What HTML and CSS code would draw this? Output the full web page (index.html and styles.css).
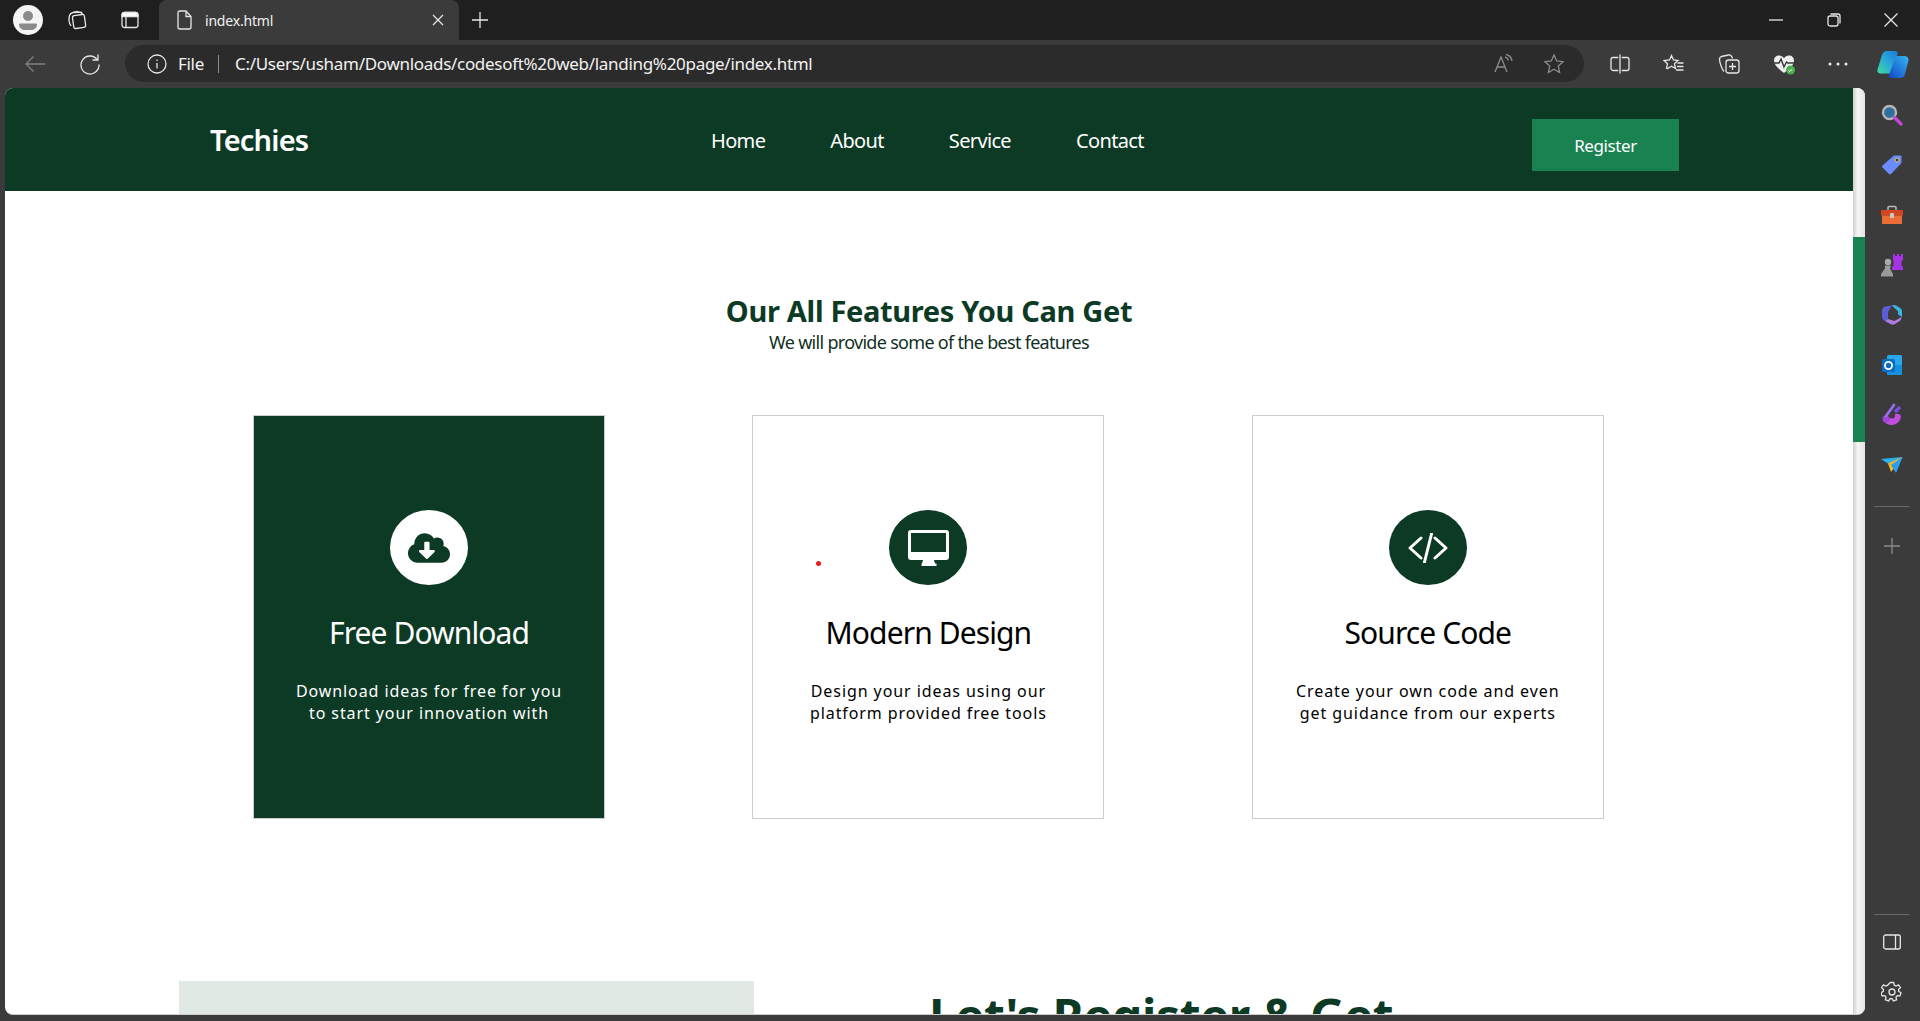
FILE: index.html
```html
<!DOCTYPE html>
<html lang="en">
<head>
  <meta charset="UTF-8">
  <meta name="viewport" content="width=device-width, initial-scale=1.0">
  <title>index.html</title>
  <link rel="stylesheet" href="styles.css">
</head>
<body>

  <!-- tab strip -->
  <div class="tabstrip">
    <div class="avatar">
      <svg width="30" height="30" viewBox="0 0 30 30"><circle cx="15" cy="15" r="15" fill="#f4f4f4"/><circle cx="15" cy="11" r="5" fill="#8a8a8a"/><path d="M7 18.500h16a1 1 0 0 1 1 1c0 3.500-3 5.500-6 5.500h-6c-3 0-6-2-6-5.500a1 1 0 0 1 1-1z" fill="#8a8a8a"/></svg>
    </div>
    <span class="strip-btn">
      <svg class="ico" width="22" height="22" viewBox="0 0 22 22"><rect x="7" y="6" width="12" height="13" rx="2" transform="rotate(-8 13 12)"/><path d="M5 17C3 14 2.500 10 3.500 6.500 4 5 5 4 7 3.500L12 2.500"/><path d="M8 3.500 13 3c2 0 3 .5 3.500 2"/></svg>
    </span>
    <span class="strip-btn">
      <svg class="ico" width="20" height="20" viewBox="0 0 20 20"><rect x="2" y="2.500" width="16" height="15" rx="2.500"/><path d="M2 6.500h16V5a2.500 2.500 0 0 0-2.500-2.500h-11A2.500 2.500 0 0 0 2 5z" fill="#fff"/><path d="M6 6.500v11"/></svg>
    </span>
    <div class="tab">
      <svg class="ico" width="18" height="20" viewBox="0 0 18 20"><path d="M3 3a2 2 0 0 1 2-2h6l5 5.500V17a2 2 0 0 1-2 2H5a2 2 0 0 1-2-2z"/><path d="M11 1v5.500h5"/></svg>
      <span class="tab-title">index.html</span>
      <svg class="ico tab-close" width="12" height="12" viewBox="0 0 12 12"><path d="M1 1l10 10M11 1 1 11"/></svg>
    </div>
    <span class="new-tab">
      <svg class="ico" width="18" height="18" viewBox="0 0 18 18"><path d="M9 1v16M1 9h16"/></svg>
    </span>
    <div class="win-btns">
      <svg class="ico" width="14" height="14" viewBox="0 0 14 14"><path d="M0 7h14"/></svg>
      <svg class="ico" width="14" height="14" viewBox="0 0 14 14"><rect x="1" y="3" width="10" height="10" rx="2"/><path d="M3.500 1H11a2 2 0 0 1 2 2v7.500"/></svg>
      <svg class="ico" width="14" height="14" viewBox="0 0 14 14"><path d="M.5.500l13 13M13.500.500l-13 13"/></svg>
    </div>
  </div>

  <!-- toolbar -->
  <div class="toolbar">
    <span class="tool-btn back">
      <svg class="ico" width="22" height="18" viewBox="0 0 22 18"><path d="M21 9H2M9.500 1.500 2 9l7.500 7.500"/></svg>
    </span>
    <span class="tool-btn refresh">
      <svg class="ico" width="22" height="22" viewBox="0 0 22 22"><path d="M18.500 7A9 9 0 1 0 20 11.500"/><path d="M19 1.500V7h-5.500"/></svg>
    </span>
    <div class="addressbar">
      <svg class="ico" width="20" height="20" viewBox="0 0 20 20"><circle cx="10" cy="10" r="9"/><path d="M10 9v5.500M10 5.500v1.500"/></svg>
      <span class="scheme">File</span>
      <span class="addr-sep"></span>
      <span class="url">C:/Users/usham/Downloads/codesoft%20web/landing%20page/index.html</span>
      <div class="addr-right">
        <svg class="ico dim" width="20" height="20" viewBox="0 0 20 20"><path d="M1 18 7 3l6 15M3 13h8"/><path d="M11 3c2 .5 3 1.500 3.500 3.500M12 .5c3 .5 5.500 3 6 6.500"/></svg>
        <svg class="ico dim" width="22" height="22" viewBox="0 0 22 22"><path d="M11 2l2.700 6 6.300.7-4.700 4.300 1.300 6.500L11 16.300 5.400 19.500 6.700 13 2 8.700 8.300 8z"/></svg>
      </div>
    </div>
    <div class="tool-right">
      <svg class="ico" width="20" height="20" viewBox="0 0 20 20"><rect x="1" y="3.500" width="18" height="13" rx="2"/><path d="M10 1v18" stroke="#3b3b3b" stroke-width="3.500"/><path d="M10 .5v19"/></svg>
      <svg class="ico" width="22" height="22" viewBox="0 0 22 22"><path d="M8.500 2.500l2 4.500 4.500.5-3.500 3.300 1 4.700-4-2.300-4 2.300-1-.2 1-4.500L1 7.500 6.500 7z"/><path d="M14.500 10h6M14 13.500h6.500M13 17h7.500"/></svg>
      <svg class="ico" width="22" height="22" viewBox="0 0 22 22"><path d="M6 18.500C4.500 17 2 11 1.500 7c-.2-2 .5-3 2-3.500l7-1.500c1.500-.3 2.500.2 3.500 2l.5 1.500"/><rect x="8" y="7" width="13" height="13" rx="2.500"/><path d="M14.500 10v7M11 13.500h7"/></svg>
      <svg width="24" height="24" viewBox="0 0 24 24"><path d="M12 21C6 16.500 2 13 2 8.500 2 5.500 4.200 3.500 7 3.500c2 0 3.800 1 5 2.700 1.200-1.700 3-2.700 5-2.700 2.800 0 5 2 5 5 0 4.500-4 8-10 12.500z" fill="#eee"/><path d="M1 11h6l2-4 3 8 2.500-5 1.500 1h7" fill="none" stroke="#3b3b3b" stroke-width="1.500"/><circle cx="18.500" cy="18" r="4.500" fill="#4caf50"/><path d="M16.500 18.500l1.300 1 2.500-2.500" fill="none" stroke="#fff"/></svg>
      <svg width="22" height="6" viewBox="0 0 22 6"><circle cx="3" cy="3" r="1.500" fill="#eee"/><circle cx="11" cy="3" r="1.500" fill="#eee"/><circle cx="19" cy="3" r="1.500" fill="#eee"/></svg>
      <svg class="copilot" width="32" height="28" viewBox="0 0 32 28">
        <defs>
          <linearGradient id="copA" x1="0" y1="1" x2="1" y2="0"><stop offset="0" stop-color="#3ddc97"/><stop offset=".5" stop-color="#2aa8d8"/><stop offset="1" stop-color="#1b7be0"/></linearGradient>
          <linearGradient id="copB" x1="0" y1="1" x2="1" y2="0"><stop offset="0" stop-color="#1446c8"/><stop offset="1" stop-color="#35b6f0"/></linearGradient>
        </defs>
        <path d="M10 1h8c2 0 3 1.500 2.500 3L15 22c-.5 1-1.500 1.500-3 1.500H4c-3 0-4-2-3.500-4L5 5C6 2.500 7.500 1 10 1z" fill="url(#copA)"/>
        <path d="M20 6h7c3 0 5 2 4.500 4.500L28 24c-.5 2.500-2.500 4-5 4h-9c-2 0-2.500-1.500-2-3l6-17c.4-1.200 1-2 2-2z" fill="url(#copB)"/>
      </svg>
    </div>
  </div>

  <div class="main">
    <div class="viewport">
      <div class="page">

        <nav class="navbar">
          <div class="logo">Techies</div>
          <ul class="nav-links">
            <li>Home</li>
            <li>About</li>
            <li>Service</li>
            <li>Contact</li>
          </ul>
          <a class="btn-register">Register</a>
        </nav>

        <section class="features">
          <h2>Our All Features You Can Get</h2>
          <p class="features-sub">We will provide some of the best features</p>

          <div class="cards">
            <div class="card card-active">
              <div class="card-icon">
                <svg width="42" height="34" viewBox="0 0 640 512"><path d="M537.600 226.600c4.100-10.700 6.400-22.400 6.400-34.600 0-53-43-96-96-96-19.700 0-38.100 6-53.300 16.200C367 64.200 315.300 32 256 32c-88.400 0-160 71.600-160 160 0 2.700.1 5.400.2 8.100C40.200 219.800 0 273.200 0 336c0 79.500 64.500 144 144 144h368c70.700 0 128-57.300 128-128 0-61.900-44-113.600-102.400-125.400zm-132.900 88.700L299.300 420.700c-6.200 6.200-16.400 6.200-22.600 0L171.300 315.300c-10.100-10.100-2.900-27.300 11.300-27.300H248V176c0-8.800 7.200-16 16-16h48c8.800 0 16 7.200 16 16v112h65.400c14.200 0 21.400 17.200 11.300 27.300z" fill="#0d3a25"/></svg>
              </div>
              <h3>Free Download</h3>
              <p>Download ideas for free for you<br>to start your innovation with</p>
            </div>

            <div class="card">
              <span class="red-dot"></span>
              <div class="card-icon">
                <svg width="41" height="36" viewBox="0 0 41 36"><path fill-rule="evenodd" d="M3 0h35a3 3 0 0 1 3 3v24a3 3 0 0 1-3 3H3a3 3 0 0 1-3-3V3a3 3 0 0 1 3-3zm0 3v19h35V3z" fill="#fff"/><path d="M15 30h11l1 3.500h1.500V36h-15v-2.500H14z" fill="#fff"/></svg>
              </div>
              <h3>Modern Design</h3>
              <p>Design your ideas using our<br>platform provided free tools</p>
            </div>

            <div class="card">
              <div class="card-icon">
                <svg width="40" height="30" viewBox="0 0 40 30"><path d="M13 5 2 15 13 25M27 5l11 10-11 10M23.500 1l-7 28" fill="none" stroke="#fff" stroke-width="3" stroke-linecap="round" stroke-linejoin="round"/></svg>
              </div>
              <h3>Source Code</h3>
              <p>Create your own code and even<br>get guidance from our experts</p>
            </div>
          </div>
        </section>

        <section class="register">
          <div class="register-img"></div>
          <h2>Let's Register &amp; Get</h2>
        </section>

      </div>
      <div class="scrollbar"><div class="scroll-thumb"></div></div>
    </div>

    <!-- edge sidebar -->
    <aside class="sidebar">
      <span class="side-item">
        <svg width="22" height="22" viewBox="0 0 22 22"><circle cx="8.500" cy="8.500" r="6.500" fill="#2f6f9f" stroke="#b5b5b5" stroke-width="2.400"/><path d="M13.500 13.500 20 20" stroke="#c944d8" stroke-width="3.200" stroke-linecap="round"/></svg>
      </span>
      <span class="side-item">
        <svg width="22" height="22" viewBox="0 0 22 22"><path d="M13 1.500h6.500a1 1 0 0 1 1 1V9L10 20a1.500 1.500 0 0 1-2 0l-6.500-6.500a1.500 1.500 0 0 1 0-2z" fill="#6a8cff"/><circle cx="16" cy="6" r="2" fill="#27346e" stroke="#f5cf2c"/></svg>
      </span>
      <span class="side-item">
        <svg width="24" height="20" viewBox="0 0 24 20"><path d="M8 5V2.500a1 1 0 0 1 1-1h6a1 1 0 0 1 1 1V5" fill="none" stroke="#bbb" stroke-width="1.500"/><rect x="1" y="5" width="22" height="5.500" fill="#d2451f"/><path d="M2 10.500h20V18a1 1 0 0 1-1 1H3a1 1 0 0 1-1-1z" fill="#ec6d36"/><rect x="10" y="8" width="4" height="5" rx="1" fill="#c8c8c8"/></svg>
      </span>
      <span class="side-item">
        <svg width="24" height="24" viewBox="0 0 24 24"><path d="M14 2h2v2h2V2h2v2h2V2h2v6l-1.500 1v5l1.500 1v3H13v-3l1.500-1V9L14 8z" fill="#a733e8" transform="translate(-1 -1)"/><circle cx="8" cy="9" r="3.200" fill="#a9a9a9"/><path d="M5 12.500h6l-1 3 3 5.500v2.500H1V21l4-5.500z" fill="#9a9a9a"/></svg>
      </span>
      <span class="side-item">
        <svg width="22" height="22" viewBox="0 0 22 22"><path d="M11 1.500c1.500-.8 3-.5 4.500.3l3 1.800c1.500.9 2.500 2 2.500 3.900V13l-4-2.500V8c0-1-.5-1.500-1.500-2z" fill="#39b4e0"/><path d="M1 7c0-2 1-3.500 3-4.500L11 1.500 7 8v7L4 17C2 16 1 14.500 1 13z" fill="#5b5fd6"/><path d="M4 17l3-2 6.500 2 7-4c0 2-1 3.500-2.500 4.500l-4 2.500c-1.500.9-3 1-4.500.1z" fill="#b07adf"/></svg>
      </span>
      <span class="side-item">
        <svg width="22" height="22" viewBox="0 0 22 22"><rect x="6" y="1" width="15" height="20" rx="1.500" fill="#28a8ea"/><path d="M6 11h15v9a1 1 0 0 1-1 1H7a1 1 0 0 1-1-1z" fill="#1490df"/><rect x="1" y="5" width="13" height="13" rx="1.500" fill="#0a6cc4"/><circle cx="7.500" cy="11.500" r="3.600" fill="none" stroke="#fff" stroke-width="1.800"/></svg>
      </span>
      <span class="side-item">
        <svg width="22" height="24" viewBox="0 0 22 24"><path d="M14 11c3-.5 5 .5 6 2-.5 6-5 9-9.500 9-4 0-7-2.500-8-5l7-2c1.500 1 4 .5 4.500-1.500z" fill="#c04fe0"/><circle cx="5" cy="16" r="3.500" fill="#9c45d8"/><path d="M5 13 13 2" stroke="#9a6cf0" stroke-width="2.800" stroke-linecap="round"/><path d="M14 9l5-5" stroke="#7a4be0" stroke-width="3.600"/></svg>
      </span>
      <span class="side-item">
        <svg width="22" height="18" viewBox="0 0 22 18"><path d="M0 3 21.500 1 9 9z" fill="#2bb0ef"/><path d="M21.500 1 15 16 9 10z" fill="#1f8fe0"/><path d="M21.500 1 7 7.500 10 16z" fill="#f7b51b"/><path d="M21.500 1 10 9l5 8z" fill="#2a9ff0"/></svg>
      </span>
      <hr class="side-divider side-divider-top">
      <span class="side-item">
        <svg class="ico dim" width="16" height="16" viewBox="0 0 16 16"><path d="M8 0v16M0 8h16"/></svg>
      </span>
      <hr class="side-divider side-divider-bottom">
      <span class="side-item">
        <svg class="ico" width="18" height="16" viewBox="0 0 18 16"><rect x=".7" y="1" width="16.600" height="14" rx="2"/><path d="M12.500 1v14"/></svg>
      </span>
      <span class="side-item">
        <svg class="ico" width="22" height="22" viewBox="0 0 22 22"><circle cx="11" cy="11" r="3"/><path d="M9.300 1.500h3.400l.6 2.700 1.700.8 2.500-1.200 2 2.800-2 1.900.2 1.900 2.300 1.300-1 3.200-2.800-.2-1.200 1.500.6 2.700-3.200 1-1.400-2.300h-2l-1.400 2.300-3.200-1 .6-2.700-1.200-1.500-2.800.2-1-3.200 2.300-1.300.2-1.900-2-1.900 2-2.800 2.500 1.200 1.700-.8z"/></svg>
      </span>
    </aside>
  </div>

</body>
</html>
```

FILE: styles.css
```css
* {
  box-sizing: border-box;
}

html, body {
  height: 100%;
}

body {
  margin: 0;
  overflow: hidden;
  display: flex;
  flex-direction: column;
  background: #3b3b3b;
  color: #000;
  font-family: "Noto Sans", "Open Sans", sans-serif;
}

.ico {
  fill: none;
  stroke: #e6e6e6;
  stroke-width: 1.300;
  flex: none;
}

.ico.dim {
  stroke: #8c8c8c;
}

/* tab strip */
.tabstrip {
  height: 40px;
  flex: none;
  display: flex;
  align-items: center;
  background: #1f1f1f;
  padding-left: 13px;
}

.avatar {
  width: 30px;
  height: 30px;
  margin-right: 23px;
}

.strip-btn {
  width: 22px;
  display: flex;
  justify-content: center;
  margin-right: 31px;
}

.tab {
  width: 300px;
  height: 40px;
  margin-left: -13px;
  display: flex;
  align-items: center;
  padding: 0 15px 0 16px;
  background: #3b3b3b;
  border-radius: 8px 8px 0 0;
  color: #f0f0f0;
}

.tab-title {
  margin-left: 12px;
  font-size: 14px;
  letter-spacing: -0.2px;
}

.tab-close {
  margin-left: auto;
}

.new-tab {
  margin-left: 12px;
  display: flex;
}

.win-btns {
  margin-left: auto;
  width: 151px;
  padding-right: 22px;
  display: flex;
  justify-content: space-between;
}

/* toolbar */
.toolbar {
  height: 48px;
  flex: none;
  display: flex;
  align-items: center;
  padding-bottom: 1px;
  background: #3b3b3b;
}

.tool-btn {
  display: flex;
}

.back {
  margin-left: 24px;
}

.back .ico {
  stroke: #808080;
}

.refresh {
  margin-left: 33px;
}

.addressbar {
  width: 1461px;
  height: 37px;
  margin-left: 24px;
  padding-left: 22px;
  display: flex;
  align-items: center;
  border-radius: 19px;
  background: #2b2b2b;
  color: #f2f2f2;
  font-size: 17px;
  letter-spacing: -0.3px;
}

.scheme {
  margin-left: 11px;
}

.addr-sep {
  width: 1px;
  height: 18px;
  margin: 0 16px 0 14px;
  background: #8a8a8a;
}

.addr-right {
  margin-left: auto;
  width: 90px;
  padding-right: 19px;
  display: flex;
  align-items: center;
  justify-content: space-between;
}

.tool-right {
  flex: 1;
  padding-left: 8px;
  display: grid;
  grid-template-columns: repeat(6, 54.6px);
  align-items: center;
  justify-items: center;
}

/* page area */
.main {
  flex: 1;
  min-height: 0;
  display: flex;
}

.viewport {
  width: 1860px;
  height: 927px;
  margin-left: 5px;
  display: flex;
  overflow: hidden;
  border-radius: 8px;
  background: #fff;
  border-bottom: 1px solid #ccc;
}

.page {
  width: 1848px;
  flex: none;
  overflow: hidden;
}

.scrollbar {
  width: 12px;
  flex: none;
  background: linear-gradient(to right, #cfcfcf, #f5f5f5 40%, #e4e4e4);
}

.scroll-thumb {
  height: 205px;
  margin-top: 149px;
  background: #1a8251;
}

/* navbar */
.navbar {
  height: 103px;
  display: flex;
  align-items: flex-start;
  padding-left: 205px;
  background: #0d3a25;
  color: #fff;
}

.logo {
  width: 501px;
  margin-top: 29px;
  font-size: 29px;
  line-height: 46px;
  font-weight: 600;
  letter-spacing: -0.8px;
}

.nav-links {
  list-style: none;
  margin: 39px 0 0;
  padding: 0;
  display: flex;
  gap: 65px;
  font-size: 20px;
  line-height: 28px;
  letter-spacing: -0.65px;
}

.btn-register {
  width: 147px;
  height: 52px;
  margin: 31px 174px 0 auto;
  display: flex;
  align-items: center;
  justify-content: center;
  padding-top: 1px;
  background: #1a8251;
  color: #fff;
  font-size: 17px;
  letter-spacing: -0.4px;
}

/* features */
.features {
  padding-top: 100px;
  text-align: center;
}

.features h2 {
  margin: 0;
  font-size: 29px;
  line-height: 40px;
  font-weight: 700;
  letter-spacing: -0.33px;
  color: #0d3a25;
}

.features-sub {
  margin: -1px 0 0;
  font-size: 18px;
  line-height: 24px;
  letter-spacing: -0.7px;
  color: #10301f;
}

.cards {
  margin: 61px 0 0 248px;
  width: 1350.8px;
  display: flex;
  justify-content: space-between;
}

.card {
  position: relative;
  width: 352px;
  height: 404px;
  padding-top: 94px;
  border: 1px solid #ccc;
}

.card-active {
  background: #0d3a25;
  color: #fff;
}

.card-icon {
  width: 78px;
  height: 75px;
  margin: 0 auto;
  display: flex;
  align-items: center;
  justify-content: center;
  border-radius: 50%;
  background: #0d3a25;
}

.card-active .card-icon {
  background: #fff;
}

.card h3 {
  margin: 27px 0 0;
  font-size: 30px;
  line-height: 42px;
  font-weight: 400;
  letter-spacing: -0.9px;
}

.card p {
  margin: 26px 0 0;
  font-size: 16px;
  line-height: 22px;
  letter-spacing: 0.92px;
}

.red-dot {
  position: absolute;
  left: 63px;
  top: 145px;
  width: 5px;
  height: 5px;
  border-radius: 50%;
  background: #ec1c24;
}

/* register teaser */
.register {
  margin-top: 162px;
  padding-left: 174px;
  display: flex;
  align-items: flex-start;
}

.register-img {
  width: 575px;
  height: 300px;
  flex: none;
  background: #e0e9e4;
}

.register h2 {
  margin: 0 0 0 175px;
  padding-top: 5px;
  font-size: 48px;
  line-height: 60px;
  font-weight: 700;
  letter-spacing: -0.3px;
  color: #0d3a25;
}

/* sidebar */
.sidebar {
  flex: 1;
  display: flex;
  flex-direction: column;
  align-items: center;
  padding: 2px 2px 4px 0;
}

.side-item {
  height: 50px;
  flex: none;
  display: flex;
  align-items: center;
  justify-content: center;
}

.side-divider {
  width: 35px;
  height: 1px;
  flex: none;
  margin: 0;
  border: 0;
  background: #6a6a6a;
}

.side-divider-top {
  margin-top: 16px;
  margin-bottom: 14px;
}

.side-divider-bottom {
  margin-top: auto;
  margin-bottom: 2px;
}
```
